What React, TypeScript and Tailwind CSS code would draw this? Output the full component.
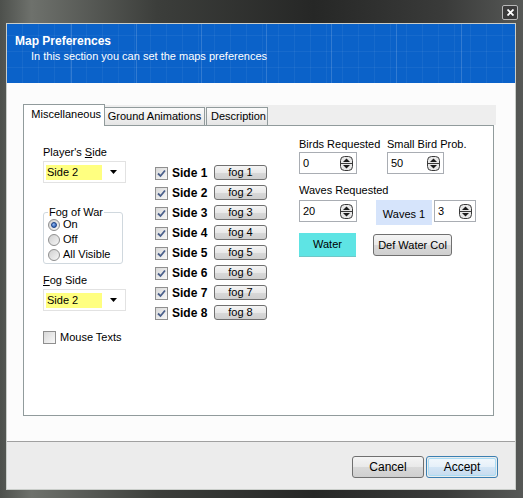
import React from "react";

function Check({ checked }: { checked?: boolean }) {
  return (
    <div className="w-[13px] h-[13px] border border-[#8f8f8f] bg-[linear-gradient(135deg,#d8d8d8,#f8f8f8)] flex items-center justify-center shrink-0">
      {checked && (
        <svg width="9" height="9" viewBox="0 0 9 9">
          <path d="M1 4.5 L3.5 7 L8 1.5" fill="none" stroke="#4a5f8a" strokeWidth="1.8" />
        </svg>
      )}
    </div>
  );
}

function Radio({ checked }: { checked?: boolean }) {
  return (
    <div className="w-[12px] h-[12px] rounded-full border border-[#8f8f8f] bg-[linear-gradient(135deg,#cfcfcf,#f6f6f6)] flex items-center justify-center shrink-0">
      {checked && (
        <div className="w-[6px] h-[6px] rounded-full bg-[radial-gradient(circle_at_35%_35%,#8fb6f0,#1d4fa8)] border border-[#183f85]" />
      )}
    </div>
  );
}

function SpinIcon() {
  return (
    <svg width="13" height="15" viewBox="0 0 13 15">
      <rect x="0.5" y="0.5" width="12" height="14" rx="4" fill="#e8e8e8" stroke="#3a3a3a" />
      <line x1="1" y1="7.5" x2="12" y2="7.5" stroke="#3a3a3a" />
      <path d="M3 6 L6.5 2.5 L10 6 Z" fill="#1a1a1a" />
      <path d="M3 9 L6.5 12.5 L10 9 Z" fill="#1a1a1a" />
    </svg>
  );
}

function Spin({ value, w }: { value: string; w: string }) {
  return (
    <div className={`${w} h-[22px] border border-[#a9adb3] bg-white flex items-center justify-between pl-[3px] pr-[3px]`}>
      <span>{value}</span>
      <SpinIcon />
    </div>
  );
}

function Combo() {
  return (
    <div className="w-[83px] h-[22px] border border-[#e2e2e2] bg-white flex items-center pl-[2px] pr-[8px] justify-between">
      <div className="w-[56px] h-[15px] bg-[#ffff80] leading-[15px] pl-[1px]">Side 2</div>
      <svg width="7" height="4" viewBox="0 0 7 4">
        <path d="M0 0 L7 0 L3.5 4 Z" fill="#000" />
      </svg>
    </div>
  );
}

function Btn({ children, className }: { children: React.ReactNode; className: string }) {
  return (
    <div
      className={`border border-[#707070] rounded-[3px] bg-[linear-gradient(#f4f4f4,#e9e9e9_50%,#d9d9d9_51%,#cfcfcf)] flex items-center justify-center ${className}`}
    >
      {children}
    </div>
  );
}

export default function App() {
  const sides = [1, 2, 3, 4, 5, 6, 7, 8];

  return (
    <div className="w-[523px] h-[498px] flex flex-col pl-[6px] pr-[7px] pb-[8px] bg-[linear-gradient(90deg,#4d504c,#6e716c_6%,#3c3e3b_30%,#262726_60%,#3a3b3a_85%,#565856)] font-['Liberation_Sans',Arial,sans-serif] text-[11px] text-black">
      {/* title bar */}
      <div className="h-[23px] flex items-start justify-end pt-[5px] -mr-[2px]">
        <div className="w-[16px] h-[15px] border border-[#b8b8b8] bg-[#3b3b3b] rounded-[2px] flex items-center justify-center">
          <svg width="7" height="7" viewBox="0 0 7 7">
            <path d="M0.5 0.5 L6.5 6.5 M6.5 0.5 L0.5 6.5" stroke="#fff" strokeWidth="1.8" />
          </svg>
        </div>
      </div>

      {/* client */}
      <div className="flex-1 flex flex-col border border-[#c9cdc9] bg-white">
        <div className="h-[59px] bg-[#0b62c9] bg-[repeating-linear-gradient(90deg,transparent_0_64px,rgba(255,255,255,0.16)_64px_65px),repeating-linear-gradient(90deg,transparent_0_15px,rgba(255,255,255,0.05)_15px_16px),repeating-linear-gradient(0deg,transparent_0_15px,rgba(255,255,255,0.05)_15px_16px)] pt-[10px] pl-[8px] text-white">
          <div className="font-bold text-[12px] leading-[14px]">Map Preferences</div>
          <div className="pl-[16px] mt-[2px] leading-[13px]">In this section you can set the maps preferences</div>
        </div>

        <div className="h-[358px] bg-[#fcfcfc] pt-[22px] pl-[16px]">
          <div className="w-[473px]">
            <div className="h-[20px] bg-[#eeeeee] flex items-end whitespace-nowrap">
              <div className="relative z-10 -mb-px h-[22px] w-[82px] bg-white border border-b-0 border-[#919b9c] flex items-center justify-end pr-[3px] pb-[2px]">
                Miscellaneous
              </div>
              <div className="h-[18px] w-[100px] border border-b-0 border-l-0 border-[#919b9c] bg-[linear-gradient(#fbfbfb,#e5e5e5)] flex items-center justify-center">
                Ground Animations
              </div>
              <div className="ml-px h-[18px] w-[62px] border border-b-0 border-[#919b9c] bg-[linear-gradient(#fbfbfb,#e5e5e5)] flex items-center justify-end pr-[1px]">
                Description
              </div>
            </div>

            <div className="w-[471px] h-[291px] border border-[#919b9c] bg-white flex pl-[19px]">
              {/* column 1 */}
              <div className="w-[112px] pt-[20px] flex flex-col">
                <div className="leading-[13px]">
                  Player's <span className="underline">S</span>ide
                </div>
                <div className="mt-[2px]">
                  <Combo />
                </div>
                <div className="relative mt-[29px] w-[80px] border border-[#d0d8de] rounded-[3px] pt-[4px] pl-[4px] pb-px">
                  <span className="absolute -top-[7px] left-[4px] bg-white px-px leading-[13px]">Fog of War</span>
                  <div className="h-[15px] flex items-center gap-[3px]">
                    <Radio checked />
                    <span>On</span>
                  </div>
                  <div className="h-[15px] flex items-center gap-[3px]">
                    <Radio />
                    <span>Off</span>
                  </div>
                  <div className="h-[15px] flex items-center gap-[3px]">
                    <Radio />
                    <span>All Visible</span>
                  </div>
                </div>
                <div className="mt-[10px] leading-[13px]">
                  <span className="underline">F</span>og Side
                </div>
                <div className="mt-[2px]">
                  <Combo />
                </div>
                <div className="mt-[19px] h-[14px] flex items-center gap-[4px]">
                  <Check />
                  <span>Mouse Texts</span>
                </div>
              </div>

              {/* column 2 */}
              <div className="w-[144px] pt-[37px] flex flex-col">
                {sides.map((s) => (
                  <div key={s} className="h-[20px] flex items-center">
                    <Check checked />
                    <span className="ml-[4px] w-[42px] font-bold text-[12px]">Side {s}</span>
                    <Btn className="w-[53px] h-[15px] -mt-[2px]">fog {s}</Btn>
                  </div>
                ))}
              </div>

              {/* column 3 */}
              <div className="pt-[12px] flex flex-col">
                <div className="flex leading-[13px]">
                  <span className="w-[88px]">Birds Requested</span>
                  <span>Small Bird Prob.</span>
                </div>
                <div className="mt-[1px] flex">
                  <div className="w-[88px]">
                    <Spin value="0" w="w-[58px]" />
                  </div>
                  <Spin value="50" w="w-[57px]" />
                </div>
                <div className="mt-[10px] leading-[13px]">Waves Requested</div>
                <div className="mt-[3px] flex items-start">
                  <Spin value="20" w="w-[58px]" />
                  <div className="ml-[19px] w-[56px] h-[25px] bg-[#d6e4fb] flex items-center justify-center pt-[3px]">
                    Waves 1
                  </div>
                  <div className="ml-[2px]">
                    <Spin value="3" w="w-[42px]" />
                  </div>
                </div>
                <div className="mt-[8px] flex items-center">
                  <div className="w-[57px] h-[24px] bg-[#5ee4e4] border-b border-[#6fc7c7] flex items-center justify-center">Water</div>
                  <Btn className="ml-[17px] w-[79px] h-[22px]">Def Water Col</Btn>
                </div>
              </div>
            </div>
          </div>
        </div>

        <div className="flex-1 border-t border-[#a0a0a0] bg-[#ececec] flex justify-end items-start pt-[14px] pr-[17px] gap-[2px]">
          <Btn className="w-[72px] h-[22px] text-[12px]">Cancel</Btn>
          <div className="w-[72px] h-[22px] rounded-[3px] border border-[#3c7fb1] p-px">
            <div className="w-full h-full rounded-[2px] border border-[#a9dcf4] bg-[linear-gradient(#f1f7fc,#e6f0f9_50%,#d3e5f5_51%,#c8dcef)] flex items-center justify-center text-[12px]">
              Accept
            </div>
          </div>
        </div>
      </div>
    </div>
  );
}
